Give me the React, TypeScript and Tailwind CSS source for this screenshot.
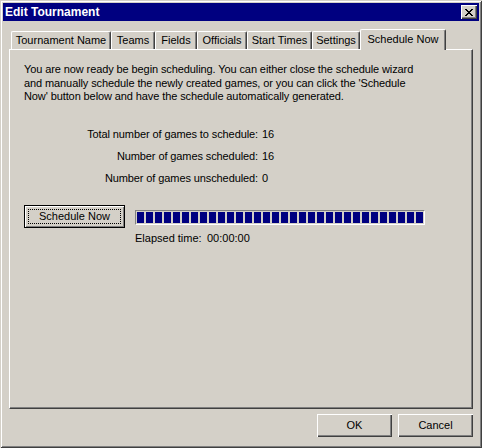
import React from "react";

const raised =
  "shadow-[inset_1px_1px_0_#ffffff,inset_-1px_-1px_0_#404040,inset_-2px_-2px_0_#808080]";

function CloseGlyph() {
  const rows = [
    "##....##",
    ".##..##.",
    "..####..",
    "...##...",
    "..####..",
    ".##..##.",
    "##....##",
  ];
  const rects: React.ReactElement[] = [];
  rows.forEach((r, y) =>
    r.split("").forEach((c, x) => {
      if (c === "#") rects.push(<rect key={`${x}-${y}`} x={x} y={y} width={1} height={1} fill="#000" />);
    })
  );
  return (
    <svg width="8" height="7" viewBox="0 0 8 7" shapeRendering="crispEdges">
      {rects}
    </svg>
  );
}

type Tab = { label: string; w: string; selected?: boolean };

const tabs: Tab[] = [
  { label: "Tournament Name", w: "w-[100px]" },
  { label: "Teams", w: "w-[44px]" },
  { label: "Fields", w: "w-[42px]" },
  { label: "Officials", w: "w-[50px]" },
  { label: "Start Times", w: "w-[65px]" },
  { label: "Settings", w: "w-[48px]" },
  { label: "Schedule Now", w: "w-[86px]", selected: true },
];

export default function App() {
  return (
    <div className="w-[482px] h-[448px] bg-[#d4d0c8] p-[3px] flex flex-col text-[11px] text-black font-['Liberation_Sans',Arial,sans-serif] shadow-[inset_1px_1px_0_#d4d0c8,inset_-1px_-1px_0_#404040,inset_2px_2px_0_#ffffff,inset_-2px_-2px_0_#808080] select-none">
      {/* Title bar */}
      <div className="h-[18px] bg-[#000080] flex items-center justify-between pl-[2px] pr-[2px]">
        <span className="text-white font-bold text-[12px] leading-[18px]">Edit Tournament</span>
        <div className={`w-[16px] h-[14px] bg-[#d4d0c8] flex items-center justify-center ${raised}`}>
          <CloseGlyph />
        </div>
      </div>

      <div className="flex-1 flex flex-col px-[6px]">
        {/* Tabs */}
        <div className="mt-[8px] h-[20px] flex items-end pl-[2px]">
          {tabs.map((t) =>
            t.selected ? (
              <div
                key={t.label}
                className={`${t.w} h-[21px] -mb-[1px] relative z-10 bg-[#d4d0c8] border-l border-t border-white border-r border-r-[#404040] rounded-t-[2px] shadow-[inset_-1px_0_0_#808080] flex items-start justify-center pt-[3px] leading-[13px]`}
              >
                {t.label}
              </div>
            ) : (
              <div
                key={t.label}
                className={`${t.w} h-[18px] bg-[#d4d0c8] border-l border-t border-white border-r border-r-[#404040] rounded-t-[2px] shadow-[inset_-1px_0_0_#808080] flex items-center justify-center leading-[13px]`}
              >
                {t.label}
              </div>
            )
          )}
        </div>

        {/* Panel */}
        <div className="h-[360px] border-l border-t border-white border-r border-b border-r-[#404040] border-b-[#404040] shadow-[inset_-1px_-1px_0_#808080] pl-[14px] pt-[13px] flex flex-col">
          <p className="leading-[13.5px] tracking-[-0.1px]">
            You are now ready be begin scheduling. You can either close the schedule wizard
            <br />
            and manually schedule the newly created games, or you can click the 'Schedule
            <br />
            Now' button below and have the schedule automatically generated.
          </p>

          <div className="mt-[19px] grid grid-cols-[234px_auto] gap-x-[4px] tracking-[-0.1px]">
            <div className="h-[22px] leading-[22px] text-right">Total number of games to schedule:</div>
            <div className="h-[22px] leading-[22px]">16</div>
            <div className="h-[22px] leading-[22px] text-right">Number of games scheduled:</div>
            <div className="h-[22px] leading-[22px]">16</div>
            <div className="h-[22px] leading-[22px] text-right">Number of games unscheduled:</div>
            <div className="h-[22px] leading-[22px]">0</div>
          </div>

          <div className="mt-[16px] flex items-start">
            <div className="relative w-[101px] h-[23px] border border-black bg-[#d4d0c8] shadow-[inset_1px_1px_0_#ffffff,inset_-1px_-1px_0_#808080] flex items-center justify-center leading-[13px]">
              <div className="absolute inset-[3px] border border-dotted border-black" />
              <span className="relative">Schedule Now</span>
            </div>
            <div className="ml-[10px] flex flex-col">
              <div className="mt-[5px] w-[290px] h-[15px] border-l border-t border-[#808080] border-r border-b border-r-white border-b-white p-[1px] flex gap-[2px] overflow-hidden">
                {Array.from({ length: 32 }).map((_, i) => (
                  <div key={i} className="w-[7px] h-[11px] shrink-0 bg-[#000080]" />
                ))}
              </div>
              <div className="mt-[7px] leading-[13px] flex">
                <span className="w-[72px]">Elapsed time:</span>
                <span>00:00:00</span>
              </div>
            </div>
          </div>
        </div>

        {/* Bottom buttons */}
        <div className="mt-[5px] flex justify-end gap-[6px]">
          <div className={`w-[75px] h-[23px] bg-[#d4d0c8] flex items-center justify-center leading-[13px] ${raised}`}>OK</div>
          <div className={`w-[75px] h-[23px] bg-[#d4d0c8] flex items-center justify-center leading-[13px] ${raised}`}>Cancel</div>
        </div>
      </div>
    </div>
  );
}
